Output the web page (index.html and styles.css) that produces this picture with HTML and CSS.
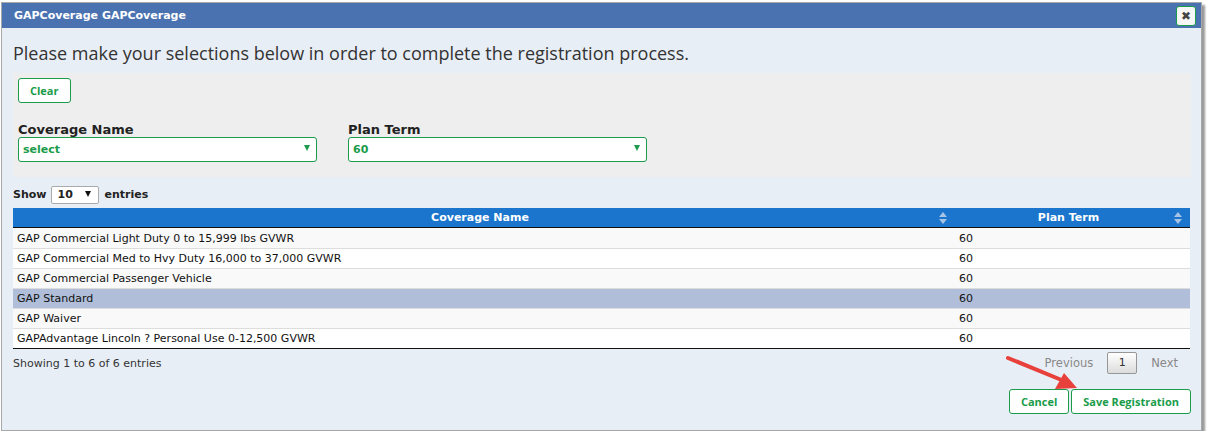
FILE: index.html
```html
<!DOCTYPE html>
<html lang="en">
<head>
    <meta charset="UTF-8">
    <title>GAPCoverage</title>
    <link rel="stylesheet" href="styles.css">
</head>
<body>

    <div class="dialog">
        <div class="titlebar">
            <span class="title">GAPCoverage GAPCoverage</span>
            <button class="close">&#10006;</button>
        </div>

        <div class="content">
            <h1>Please make your selections below in order to complete the registration process.</h1>

            <div class="filters">
                <button class="btn">Clear</button>
                <div class="fields">
                    <div class="field">
                        <label>Coverage Name</label>
                        <div class="select"><span>select</span><i class="caret"></i></div>
                    </div>
                    <div class="field">
                        <label>Plan Term</label>
                        <div class="select"><span>60</span><i class="caret"></i></div>
                    </div>
                </div>
            </div>

            <div class="length">
                Show
                <div class="small-select"><span>10</span><i></i></div>
                entries
            </div>

            <table>
                <thead>
                    <tr>
                        <th class="col-name">Coverage Name<b class="sort"></b></th>
                        <th>Plan Term<b class="sort"></b></th>
                    </tr>
                </thead>
                <tbody>
                    <tr class="odd"><td>GAP Commercial Light Duty 0 to 15,999 lbs GVWR</td><td>60</td></tr>
                    <tr><td>GAP Commercial Med to Hvy Duty 16,000 to 37,000 GVWR</td><td>60</td></tr>
                    <tr class="odd"><td>GAP Commercial Passenger Vehicle</td><td>60</td></tr>
                    <tr class="selected"><td>GAP Standard</td><td>60</td></tr>
                    <tr class="odd"><td>GAP Waiver</td><td>60</td></tr>
                    <tr><td>GAPAdvantage Lincoln ? Personal Use 0-12,500 GVWR</td><td>60</td></tr>
                </tbody>
            </table>

            <div class="table-foot">
                <span class="info">Showing 1 to 6 of 6 entries</span>
                <div class="paging">
                    <span class="disabled">Previous</span>
                    <span class="page">1</span>
                    <span class="disabled">Next</span>
                </div>
            </div>

            <div class="actions">
                <button class="btn">Cancel</button>
                <button class="btn">Save Registration</button>
            </div>

            <svg class="arrow" width="90" height="50" viewBox="0 0 90 50">
                <line x1="4" y1="4" x2="60" y2="27" stroke="#e8413c" stroke-width="4" stroke-linecap="round"/>
                <polygon points="73,34 51,35 60,19" fill="#e8413c"/>
            </svg>
        </div>
    </div>

</body>
</html>
```

FILE: styles.css
```css
html,body {
	margin:0;
	padding:0;
	background:#fff;
	font-family:"DejaVu Sans", Verdana, sans-serif;
	font-size:11px;
	color:#222;
}
button {
	font-family:inherit;
	cursor:pointer;
	outline:none;
}
.dialog {
	width:1199px;
	height:427px;
	margin:2px 0 0 1px;
	border:1px solid #a8a8a8;
	background:#e8eef6;
	box-shadow:3px 3px 2px #999;
	position:relative;
}
.titlebar {
	height:25px;
	background:#4a72b0;
	display:flex;
	align-items:center;
	justify-content:space-between;
	padding:0 5px 0 12px;
}
.title {
	color:#fff;
	font-weight:bold;
	font-size:11px;
}
.close {
	width:20px;
	height:20px;
	padding:0;
	background:#f6f6f6;
	border:1px solid #1a9c4a;
	border-radius:3px;
	color:#444;
	font-size:12px;
	line-height:18px;
	text-align:center;
}
.content {
	padding:0 10px 0 11px;
	position:relative;
}
h1 {
	margin:0;
	padding:13px 0 7px;
	font-family:"Open Sans", sans-serif;
	font-weight:normal;
	font-size:18px;
	line-height:25px;
	color:#333;
}
.filters {
	background:#eee;
	height:104px;
	padding:5px;
	box-sizing:border-box;
	width:1178px;
}
.btn {
	height:25px;
	padding:0 11px;
	background:#fff;
	border:1px solid #1a9c4a;
	border-radius:3px;
	color:#1a9c4a;
	font-family:"Open Sans", sans-serif;
	font-weight:bold;
	font-size:11px;
}
.fields {
	display:flex;
	gap:31px;
	margin-top:19px;
}
.field label {
	display:block;
	font-weight:bold;
	font-size:13px;
	line-height:15px;
	color:#222;
}
.select {
	width:299px;
	height:25px;
	box-sizing:border-box;
	background:#fff;
	border:1px solid #1a9c4a;
	border-radius:3px;
	display:flex;
	align-items:center;
	justify-content:space-between;
	padding:0 6px 0 4px;
	color:#1a9c4a;
	font-weight:bold;
	font-size:11px;
}
.caret {
	width:0;
	height:0;
	border-left:3px solid transparent;
	border-right:3px solid transparent;
	border-top:6px solid #1a9c4a;
	margin-bottom:3px;
}
.length {
	display:flex;
	align-items:center;
	gap:5px;
	font-weight:bold;
	margin:8px 0 4px;
	height:19px;
}
.small-select {
	width:48px;
	height:18px;
	box-sizing:border-box;
	background:#fff;
	border:1px solid #aaa;
	border-radius:2px;
	display:flex;
	align-items:center;
	justify-content:space-between;
	padding:0 7px 0 5px;
}
.small-select i {
	border-left:3px solid transparent;
	border-right:3px solid transparent;
	border-top:6px solid #111;
	margin-bottom:2px;
}
table {
	width:1177px;
	border-collapse:collapse;
	border-bottom:1px solid #111;
}
th {
	background:#1b75cc;
	color:#fff;
	font-weight:bold;
	height:19px;
	padding:0 18px 0 10px;
	border-bottom:1px solid #111;
	position:relative;
	text-align:center;
}
th.col-name {
	width:914px;
}
.sort {
	position:absolute;
	right:8px;
	top:4px;
	width:8px;
	height:12px;
}
.sort:before, .sort:after {
	content:"";
	position:absolute;
	left:0;
	border-left:4px solid transparent;
	border-right:4px solid transparent;
}
.sort:before {
	top:0;
	border-bottom:5px solid #a7c3e4;
}
.sort:after {
	bottom:0;
	border-top:5px solid #a7c3e4;
}
td {
	height:19px;
	padding:0 4px;
	border-top:1px solid #ddd;
	background:#fff;
	color:#111;
}
tbody tr:first-child td {
	border-top:none;
	height:20px;
}
tr.odd td {
	background:#f9f9f9;
}
tr.selected td {
	background:#b0bed9;
}
.table-foot {
	display:flex;
	justify-content:space-between;
	align-items:center;
	height:22px;
	margin-top:3px;
	width:1177px;
}
.info {
	color:#333;
}
.paging {
	display:flex;
	align-items:center;
	gap:14px;
	margin-right:12px;
}
.disabled {
	color:#888;
	font-size:11.5px;
}
.page {
	width:30px;
	height:22px;
	box-sizing:border-box;
	border:1px solid #979797;
	border-radius:2px;
	background:linear-gradient(#fff, #dcdcdc);
	color:#333;
	text-align:center;
	line-height:20px;
}
.actions {
	display:flex;
	justify-content:flex-end;
	gap:2px;
	margin-top:15px;
	width:1178px;
}
.arrow {
	position:absolute;
	left:1002px;
	top:326px;
}
```
